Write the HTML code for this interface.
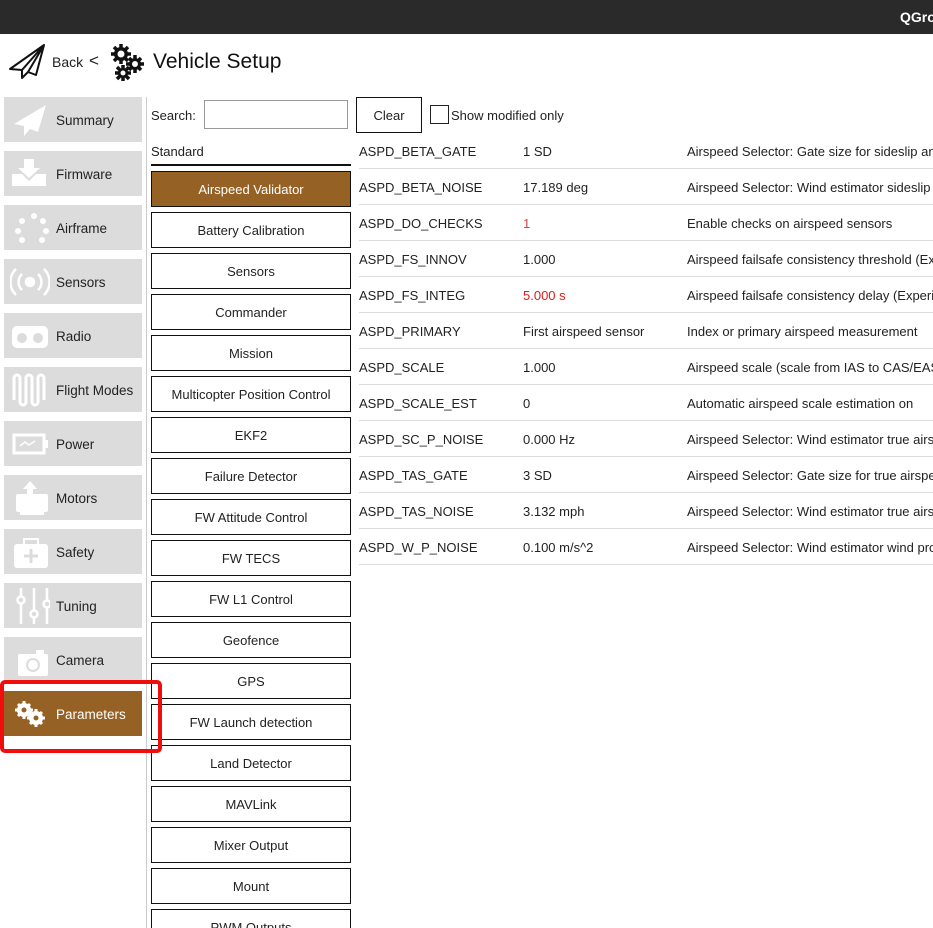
<!DOCTYPE html>
<html><head><style>
*{margin:0;padding:0;box-sizing:border-box}
html,body{width:933px;height:928px;overflow:hidden}
body{background:#fff;font-family:"Liberation Sans",sans-serif;font-size:13px;color:#222;position:relative}
.top{position:absolute;left:0;top:0;width:933px;height:34px;background:#2b2a2a}
.top span{position:absolute;left:900px;top:9px;color:#fff;font-weight:bold;font-size:14px}
.abs{position:absolute}
.sb{position:absolute;left:4px;width:138px;height:45px;background:#dcdcdc}
.sb .t{position:absolute;left:52px;top:16px;font-size:13.5px;color:#222}
.sb svg{position:absolute;left:6px;top:5px}
.grp{position:absolute;left:151px;width:200px;height:36px;border:1.5px solid #111;text-align:center;line-height:35px;font-size:13px;background:#fff}
.row{position:absolute;left:359px;width:574px;height:36px;border-bottom:1px solid #ddd}
.row span{position:absolute;top:11px;white-space:nowrap}
</style></head><body>
<div class="top"><span>QGro</span></div>
<svg class="abs" style="left:8px;top:43px" width="38" height="37" viewBox="0 0 38 37"><path d="M36 2 L2 26 L14 27 L14 35 L20 29 L28 32 Z M36 2 L14 27 M36 2 L20 29" fill="none" stroke="#111" stroke-width="2" stroke-linejoin="round"/></svg>
<div class="abs" style="left:52px;top:54px;font-size:14px">Back</div>
<div class="abs" style="left:89px;top:51px;font-size:17px">&lt;</div>
<svg class="abs" style="left:108px;top:43px" width="38" height="38" viewBox="0 0 38 38">
<g fill="#111"><circle cx="13" cy="11" r="7"/><circle cx="27" cy="21" r="6"/><circle cx="15" cy="30" r="5"/></g>
<g stroke="#111" stroke-width="3.5"><path d="M13 1v20M3 11h20M6 4l14 14M20 4L6 18"/><path d="M27 12v18M18 21h18M21 15l12 12M33 15l-12 12"/><path d="M15 22v16M7 30h16M9 24l12 12M21 24l-12 12"/></g>
<g fill="#fff"><circle cx="13" cy="11" r="3.5"/><circle cx="27" cy="21" r="3"/><circle cx="15" cy="30" r="2.5"/></g></svg>
<div class="abs" style="left:153px;top:50px;font-size:21px;color:#111">Vehicle Setup</div>
<div class="abs" style="left:146px;top:97px;width:1px;height:831px;background:#ccc"></div>

<div class="sb" style="top:97px"><svg width="40" height="36"><path d="M36 3L4 22l10 2v10l6-7 8 3z" fill="#fff"/></svg><span class="t">Summary</span></div>
<div class="sb" style="top:151px"><svg width="40" height="36"><path d="M14 3h10v9h6L19 22 8 12h6z M2 18h10l7 7 7-7h10v12H2z" fill="#fff"/></svg><span class="t">Firmware</span></div>
<div class="sb" style="top:205px"><svg width="40" height="36" fill="#fff"><circle cx="24" cy="6" r="3"/><circle cx="33" cy="11" r="3"/><circle cx="36" cy="21" r="3"/><circle cx="32" cy="30" r="3"/><circle cx="12" cy="30" r="3"/><circle cx="8" cy="21" r="3"/><circle cx="12" cy="11" r="3"/></svg><span class="t">Airframe</span></div>
<div class="sb" style="top:259px"><svg width="40" height="36" fill="none" stroke="#fff" stroke-width="2.5"><circle cx="20" cy="18" r="4" fill="#fff"/><path d="M12 10a11 11 0 0 0 0 16M28 10a11 11 0 0 1 0 16M6 5a18 18 0 0 0 0 26M34 5a18 18 0 0 1 0 26"/></svg><span class="t">Sensors</span></div>
<div class="sb" style="top:313px"><svg width="40" height="36"><rect x="2" y="8" width="36" height="22" rx="5" fill="#fff"/><circle cx="12" cy="20" r="5" fill="#dcdcdc"/><circle cx="28" cy="20" r="5" fill="#dcdcdc"/></svg><span class="t">Radio</span></div>
<div class="sb" style="top:367px"><svg width="40" height="36"><path d="M4 6v22M4 6a3 3 0 0 1 6 0v24a3 3 0 0 0 6 0V6a3 3 0 0 1 6 0v24a3 3 0 0 0 6 0V6a3 3 0 0 1 6 0v22" fill="none" stroke="#fff" stroke-width="3"/></svg><span class="t">Flight Modes</span></div>
<div class="sb" style="top:421px"><svg width="40" height="36"><rect x="4" y="9" width="30" height="18" fill="none" stroke="#fff" stroke-width="3"/><rect x="34" y="14" width="4" height="8" fill="#fff"/><path d="M10 20l5-4 4 3 6-4" stroke="#fff" fill="none" stroke-width="1.5"/></svg><span class="t">Power</span></div>
<div class="sb" style="top:475px"><svg width="40" height="36"><path d="M20 1l7 8h-4v5H17V9h-4z" fill="#fff"/><rect x="6" y="14" width="32" height="18" rx="2" fill="#fff"/><rect x="10" y="32" width="24" height="3" fill="#fff"/></svg><span class="t">Motors</span></div>
<div class="sb" style="top:529px"><svg width="40" height="36"><rect x="4" y="10" width="34" height="24" rx="3" fill="#fff"/><path d="M14 10V5h14v5" stroke="#fff" stroke-width="2" fill="none"/><path d="M21 15v14M14 22h14" stroke="#dcdcdc" stroke-width="3"/></svg><span class="t">Safety</span></div>
<div class="sb" style="top:583px"><svg width="40" height="36" stroke="#fff" stroke-width="2.5" fill="#dcdcdc"><path d="M11 0v36M24 0v36M37 0v36"/><circle cx="11" cy="12" r="3.5"/><circle cx="24" cy="26" r="3.5"/><circle cx="37" cy="16" r="3.5"/></svg><span class="t">Tuning</span></div>
<div class="sb" style="top:637px"><svg width="40" height="36"><rect x="8" y="12" width="30" height="22" rx="2" fill="#fff"/><rect x="26" y="8" width="8" height="5" fill="#fff"/><circle cx="23" cy="23" r="7" fill="#dcdcdc"/><circle cx="23" cy="23" r="5" fill="#fff"/></svg><span class="t">Camera</span></div>
<div class="sb" style="top:691px;background:#956125"><svg width="40" height="36" fill="#fff"><circle cx="14" cy="14" r="7"/><circle cx="26" cy="22" r="7"/><g stroke="#fff" stroke-width="3"><path d="M14 5v18M5 14h18M8 8l12 12M20 8L8 20M26 13v18M17 22h18M20 16l12 12M32 16L20 28"/></g><circle cx="14" cy="14" r="2.5" fill="#956125"/><circle cx="26" cy="22" r="2.5" fill="#956125"/></svg><span class="t" style="color:#fff">Parameters</span></div>

<div class="abs" style="left:151px;top:108px">Search:</div>
<div class="abs" style="left:204px;top:100px;width:144px;height:29px;border:1px solid #999"></div>
<div class="abs" style="left:356px;top:97px;width:66px;height:36px;border:1.5px solid #111;text-align:center;line-height:35px">Clear</div>
<div class="abs" style="left:430px;top:105px;width:19px;height:19px;border:1px solid #222"></div>
<div class="abs" style="left:451px;top:108px">Show modified only</div>
<div class="abs" style="left:151px;top:144px">Standard</div>
<div class="abs" style="left:151px;top:164px;width:200px;height:1.5px;background:#111"></div>

<div class="grp" style="top:171px;background:#956125;color:#fff">Airspeed Validator</div>
<div class="grp" style="top:212px">Battery Calibration</div>
<div class="grp" style="top:253px">Sensors</div>
<div class="grp" style="top:294px">Commander</div>
<div class="grp" style="top:335px">Mission</div>
<div class="grp" style="top:376px">Multicopter Position Control</div>
<div class="grp" style="top:417px">EKF2</div>
<div class="grp" style="top:458px">Failure Detector</div>
<div class="grp" style="top:499px">FW Attitude Control</div>
<div class="grp" style="top:540px">FW TECS</div>
<div class="grp" style="top:581px">FW L1 Control</div>
<div class="grp" style="top:622px">Geofence</div>
<div class="grp" style="top:663px">GPS</div>
<div class="grp" style="top:704px">FW Launch detection</div>
<div class="grp" style="top:745px">Land Detector</div>
<div class="grp" style="top:786px">MAVLink</div>
<div class="grp" style="top:827px">Mixer Output</div>
<div class="grp" style="top:868px">Mount</div>
<div class="grp" style="top:909px">PWM Outputs</div>

<div class="abs" style="left:0;top:680px;width:162px;height:73px;border:4px solid #f20d0d;border-radius:5px;z-index:5"></div>

<div class="row" style="top:133px"><span style="left:0">ASPD_BETA_GATE</span><span style="left:164px">1 SD</span><span style="left:328px">Airspeed Selector: Gate size for sideslip angle</span></div>
<div class="row" style="top:169px"><span style="left:0">ASPD_BETA_NOISE</span><span style="left:164px">17.189 deg</span><span style="left:328px">Airspeed Selector: Wind estimator sideslip</span></div>
<div class="row" style="top:205px"><span style="left:0">ASPD_DO_CHECKS</span><span style="left:164px;color:#e04040">1</span><span style="left:328px">Enable checks on airspeed sensors</span></div>
<div class="row" style="top:241px"><span style="left:0">ASPD_FS_INNOV</span><span style="left:164px">1.000</span><span style="left:328px">Airspeed failsafe consistency threshold (Exp</span></div>
<div class="row" style="top:277px"><span style="left:0">ASPD_FS_INTEG</span><span style="left:164px;color:#e21b1b">5.000 s</span><span style="left:328px">Airspeed failsafe consistency delay (Experimental)</span></div>
<div class="row" style="top:313px"><span style="left:0">ASPD_PRIMARY</span><span style="left:164px">First airspeed sensor</span><span style="left:328px">Index or primary airspeed measurement</span></div>
<div class="row" style="top:349px"><span style="left:0">ASPD_SCALE</span><span style="left:164px">1.000</span><span style="left:328px">Airspeed scale (scale from IAS to CAS/EAS)</span></div>
<div class="row" style="top:385px"><span style="left:0">ASPD_SCALE_EST</span><span style="left:164px">0</span><span style="left:328px">Automatic airspeed scale estimation on</span></div>
<div class="row" style="top:421px"><span style="left:0">ASPD_SC_P_NOISE</span><span style="left:164px">0.000 Hz</span><span style="left:328px">Airspeed Selector: Wind estimator true airspeed</span></div>
<div class="row" style="top:457px"><span style="left:0">ASPD_TAS_GATE</span><span style="left:164px">3 SD</span><span style="left:328px">Airspeed Selector: Gate size for true airspeed</span></div>
<div class="row" style="top:493px"><span style="left:0">ASPD_TAS_NOISE</span><span style="left:164px">3.132 mph</span><span style="left:328px">Airspeed Selector: Wind estimator true airspeed</span></div>
<div class="row" style="top:529px"><span style="left:0">ASPD_W_P_NOISE</span><span style="left:164px">0.100 m/s^2</span><span style="left:328px">Airspeed Selector: Wind estimator wind process</span></div>
</body></html>
